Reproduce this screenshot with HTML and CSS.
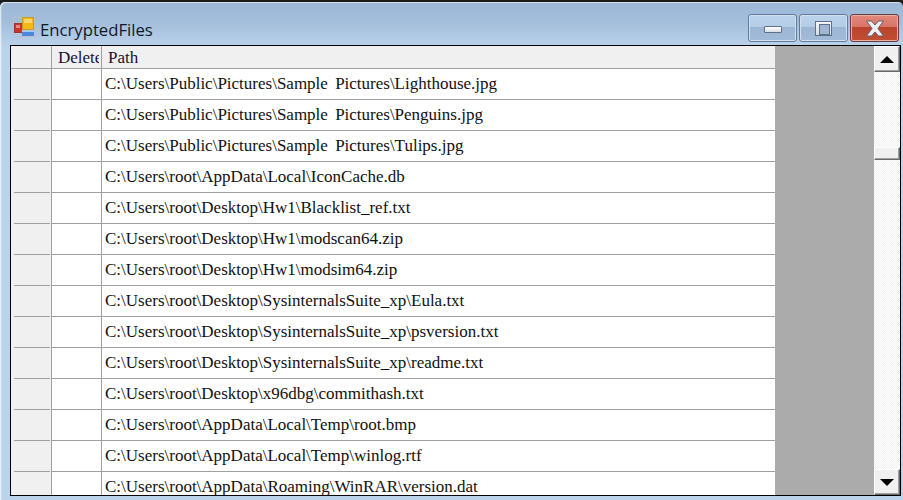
FILE: index.html
```html
<!DOCTYPE html>
<html lang="en">
<head>
<meta charset="utf-8">
<title>EncryptedFiles</title>
<link rel="stylesheet" href="styles.css">
</head>
<body>
<div class="window">
  <div class="titlebar">
    <svg class="app-icon" width="22" height="20" viewBox="0 0 22 20">
      <rect x="0.5" y="0.5" width="21" height="19" fill="none" stroke="#b4c0cf" stroke-width="1"/>
      <rect x="1.5" y="6.5" width="8" height="9" fill="#c8352a" stroke="#a8332c"/>
      <rect x="3" y="8" width="4" height="3" fill="#e88a78"/>
      <rect x="9.5" y="0.5" width="11" height="12" fill="#f2b816" stroke="#c79a2a"/>
      <rect x="11" y="2" width="8" height="4" fill="#fad766"/>
      <rect x="9" y="13" width="12" height="6" fill="#4f87e0"/>
      <rect x="9" y="13" width="12" height="2" fill="#a8c8f4"/>
    </svg>
    <span class="title">EncryptedFiles</span>
    <div class="controls">
      <button class="ctl"><span class="glyph-min"></span></button>
      <button class="ctl"><span class="glyph-max"></span></button>
      <button class="ctl close">
        <svg width="20" height="17" viewBox="0 0 20 17"><path d="M1.5 1 L6.5 1 L10 5 L13.5 1 L18.5 1 L13 8.5 L18.5 16 L13.5 16 L10 12 L6.5 16 L1.5 16 L7 8.5 Z" fill="#eceef3" stroke="#6a5c66" stroke-width="1"/></svg>
      </button>
    </div>
  </div>
  <div class="client">
    <div class="grid">
      <div class="head row">
        <div class="c rowhead"></div>
        <div class="c del"><span class="clip">Delete</span></div>
        <div class="c path">Path</div>
      </div>
      <div class="row"><div class="c rowhead"></div><div class="c del"></div><div class="c path">C:\Users\Public\Pictures\Sample Pictures\Lighthouse.jpg</div></div>
      <div class="row"><div class="c rowhead"></div><div class="c del"></div><div class="c path">C:\Users\Public\Pictures\Sample Pictures\Penguins.jpg</div></div>
      <div class="row"><div class="c rowhead"></div><div class="c del"></div><div class="c path">C:\Users\Public\Pictures\Sample Pictures\Tulips.jpg</div></div>
      <div class="row"><div class="c rowhead"></div><div class="c del"></div><div class="c path">C:\Users\root\AppData\Local\IconCache.db</div></div>
      <div class="row"><div class="c rowhead"></div><div class="c del"></div><div class="c path">C:\Users\root\Desktop\Hw1\Blacklist_ref.txt</div></div>
      <div class="row"><div class="c rowhead"></div><div class="c del"></div><div class="c path">C:\Users\root\Desktop\Hw1\modscan64.zip</div></div>
      <div class="row"><div class="c rowhead"></div><div class="c del"></div><div class="c path">C:\Users\root\Desktop\Hw1\modsim64.zip</div></div>
      <div class="row"><div class="c rowhead"></div><div class="c del"></div><div class="c path">C:\Users\root\Desktop\SysinternalsSuite_xp\Eula.txt</div></div>
      <div class="row"><div class="c rowhead"></div><div class="c del"></div><div class="c path">C:\Users\root\Desktop\SysinternalsSuite_xp\psversion.txt</div></div>
      <div class="row"><div class="c rowhead"></div><div class="c del"></div><div class="c path">C:\Users\root\Desktop\SysinternalsSuite_xp\readme.txt</div></div>
      <div class="row"><div class="c rowhead"></div><div class="c del"></div><div class="c path">C:\Users\root\Desktop\x96dbg\commithash.txt</div></div>
      <div class="row"><div class="c rowhead"></div><div class="c del"></div><div class="c path">C:\Users\root\AppData\Local\Temp\root.bmp</div></div>
      <div class="row"><div class="c rowhead"></div><div class="c del"></div><div class="c path">C:\Users\root\AppData\Local\Temp\winlog.rtf</div></div>
      <div class="row"><div class="c rowhead"></div><div class="c del"></div><div class="c path">C:\Users\root\AppData\Roaming\WinRAR\version.dat</div></div>
    </div>
    <div class="scrollbar">
      <div class="sb-btn"><span class="arrow-up"></span></div>
      <div class="sb-track"><div class="sb-thumb"></div></div>
      <div class="sb-btn"><span class="arrow-down"></span></div>
    </div>
  </div>
</div>
</body>
</html>
```
FILE: styles.css
```css
* { box-sizing: border-box; }
html, body { margin: 0; height: 100%; overflow: hidden; }
body { width: 903px; height: 500px; background: #1c1c1c; }
.window {
  width: 903px; height: 498px; margin-top: 2px;
  border-radius: 5px 5px 0 0;
  background: linear-gradient(#9db8d6 0, #a3bedb 20px, #bcd3ec 46px, #bcd3ec 100%);
  box-shadow: inset 1px 1px 0 rgba(255,255,255,.55), inset 2px 0 0 rgba(255,255,255,.2);
  padding: 0 2px 4px 10px;
  display: flex; flex-direction: column;
}
.titlebar { height: 43px; display: flex; align-items: flex-start; flex: none; }
.app-icon { margin: 15px 0 0 3px; flex: none; }
.title { margin: 18px 0 0 5px; font: 16.7px "Open Sans", "Noto Sans", sans-serif; color: #10182a; line-height: 20px; }
.controls { margin: 12px 2px 0 auto; display: flex; gap: 2px; }
.ctl {
  width: 49px; height: 28px; padding: 0; margin: 0;
  border: 1px solid #5f7c9e; border-radius: 3px;
  box-shadow: inset 0 0 0 1px #d3e0ef;
  background: linear-gradient(#bcd2eb 0, #b5cce7 45%, #9bb5d3 45%, #a2bbd8 100%);
  display: flex; align-items: center; justify-content: center;
}
.ctl.close {
  border-color: #6b3b3b;
  box-shadow: inset 0 0 0 1px #e4b0a6;
  background: linear-gradient(#e2897c 0, #d87567 45%, #ba432b 45%, #c14f34 100%);
}
.glyph-min { display: block; width: 18px; height: 7px; margin-top: 3px; background: linear-gradient(#fff, #d8dde6); border: 1px solid #5e6f88; border-radius: 1px; }
.glyph-max { display: block; width: 17px; height: 15px; background: linear-gradient(#f4f6f9, #d8dde6); border: 1px solid #5e6f88; padding: 2px 3px; }
.glyph-max::after { content: ""; display: block; width: 9px; height: 9px; background: #a0b8d4; border: 1px solid #5e6f88; }
.client {
  flex: 1; min-height: 0;
  border: 1px solid #000;
  background: #ababab;
  display: flex;
  overflow: hidden;
}
.grid { width: 863px; overflow: hidden; flex: none; }
.row { display: flex; height: 31px; }
.row.head { height: 23px; }
.c { flex: none; border-right: 1px solid #a0a0a0; border-bottom: 1px solid #a0a0a0; background: #fff;
  font: 17px/30px "Liberation Serif", serif; color: #111; white-space: nowrap; overflow: hidden; }
.rowhead { width: 41px; border-bottom: 0; background: linear-gradient(#a0a0a0, #a0a0a0) no-repeat 3px 100% / 36px 1px, #f0f0f0; }
.del { width: 50px; }
.path { width: 673px; padding-left: 3px; border-right: 0; word-spacing: 3px; }
.head .c { background: #f0f0f0; line-height: 24px; padding-left: 6px; color: #1a1030; }
.clip { display: block; width: 41px; overflow: hidden; }
.head .rowhead { padding: 0; border-bottom: 1px solid #a0a0a0; }
.scrollbar { width: 26px; flex: none; display: flex; flex-direction: column; background-color: #fff;
  background-image: conic-gradient(#f0f0f0 25%, #fff 0 50%, #f0f0f0 0 75%, #fff 0); background-size: 2px 2px; }
.sb-btn { height: 26px; flex: none; display: flex; align-items: center; justify-content: center; background: #f0f0f0;
  border: 1px solid; border-color: #fff #696969 #696969 #fff; box-shadow: inset -1px -1px 0 #a0a0a0; }
.sb-track { flex: 1; padding-top: 75px; }
.sb-thumb { height: 13px; background: #f0f0f0; border: 1px solid; border-color: #fff #696969 #696969 #fff; box-shadow: inset -1px -1px 0 #a0a0a0; }
.arrow-up { width: 0; height: 0; border: 7px solid transparent; border-top: 0; border-bottom: 7px solid #000; }
.arrow-down { width: 0; height: 0; border: 7px solid transparent; border-bottom: 0; border-top: 7px solid #000; }
```
